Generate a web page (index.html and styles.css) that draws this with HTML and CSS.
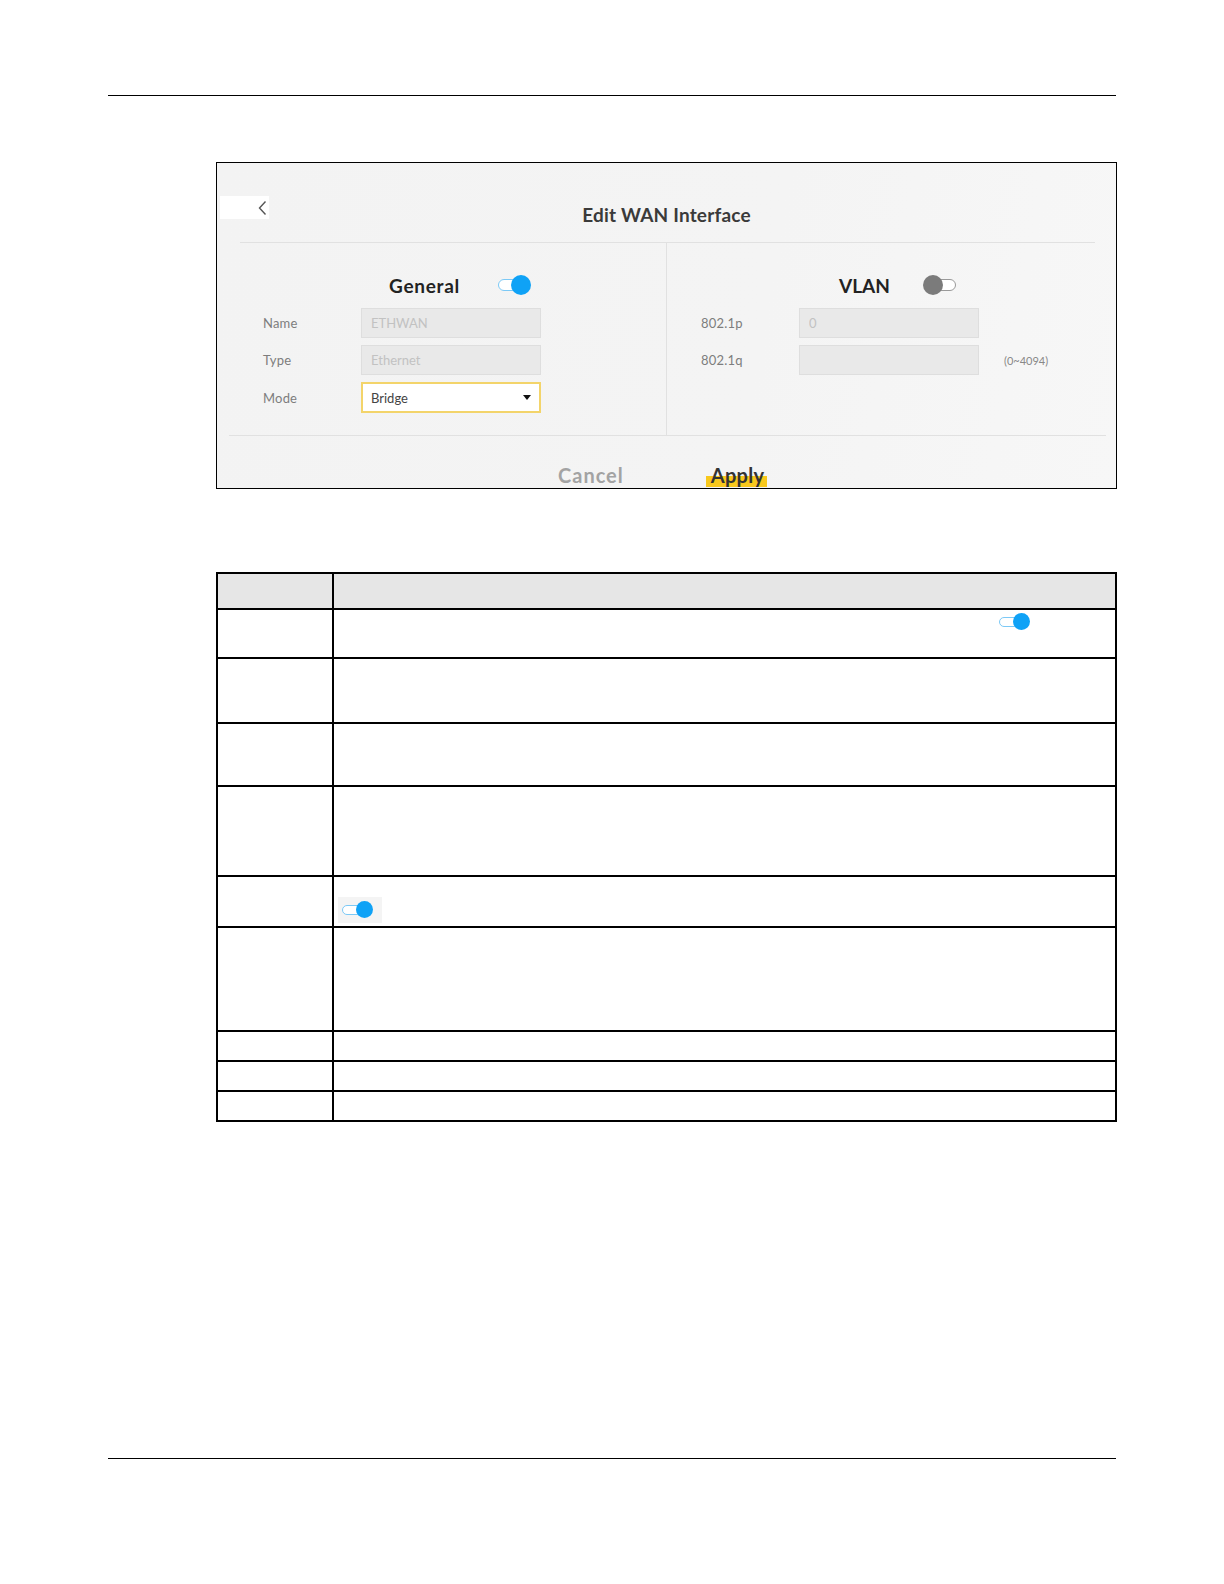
FILE: index.html
```html
<!DOCTYPE html>
<html lang="en">

<head>
    <meta charset="utf-8">
    <meta name="viewport" content="width=device-width, initial-scale=1.0">
    <title>Edit WAN Interface</title>
    <link rel="stylesheet" href="styles.css">
</head>

<body>
    <div class="page">
        <hr class="rule">

        <figure class="shot">
            <div class="shot-head">
                <button class="back" type="button" aria-label="Back">
                    <svg width="10" height="16" viewBox="0 0 10 16">
                        <path d="M7.5 1.5 L1.5 8 L7.5 14.5" fill="none" stroke="#555" stroke-width="1.4" />
                    </svg>
                </button>
                <h1 class="shot-title">Edit WAN Interface</h1>
                <div></div>
            </div>
            <div class="divider divider-head"></div>

            <div class="shot-body">
                <section class="col col-left">
                    <div class="col-heading">
                        <h2>General</h2>
                        <span class="toggle on"><span class="track"></span><span class="knob"></span></span>
                    </div>
                    <div class="field">
                        <label for="nameInput">Name</label>
                        <input type="text" id="nameInput" value="ETHWAN" disabled />
                    </div>
                    <div class="field">
                        <label for="typeInput">Type</label>
                        <input type="text" id="typeInput" value="Ethernet" disabled />
                    </div>
                    <div class="field field-mode">
                        <label for="modeSelect">Mode</label>
                        <div class="select" id="modeSelect">
                            <span>Bridge</span>
                            <svg width="8" height="5" viewBox="0 0 8 5"><path d="M0 0 H8 L4 5 Z" fill="#111" /></svg>
                        </div>
                    </div>
                </section>

                <section class="col col-right">
                    <div class="col-heading">
                        <h2>VLAN</h2>
                        <span class="toggle off"><span class="track"></span><span class="knob"></span></span>
                    </div>
                    <div class="field">
                        <label for="pInput">802.1p</label>
                        <input type="text" id="pInput" value="0" disabled />
                    </div>
                    <div class="field">
                        <label for="qInput">802.1q</label>
                        <input type="text" id="qInput" value="" disabled />
                        <span class="hint">(0~4094)</span>
                    </div>
                </section>
            </div>
            <div class="divider divider-foot"></div>

            <div class="shot-actions">
                <span class="btn-cancel">Cancel</span>
                <span class="btn-apply">Apply</span>
            </div>
        </figure>

        <table class="desc">
            <colgroup>
                <col class="desc-label">
                <col>
            </colgroup>
            <thead>
                <tr class="h-36">
                    <th></th>
                    <th></th>
                </tr>
            </thead>
            <tbody>
                <tr class="h-49">
                    <td></td>
                    <td>
                        <span class="toggle toggle-sm on inline-end"><span class="track"></span><span class="knob"></span></span>
                    </td>
                </tr>
                <tr class="h-65"><td></td><td></td></tr>
                <tr class="h-63"><td></td><td></td></tr>
                <tr class="h-90"><td></td><td></td></tr>
                <tr class="h-51">
                    <td></td>
                    <td>
                        <span class="toggle-box"><span class="toggle toggle-sm on"><span class="track"></span><span class="knob"></span></span></span>
                    </td>
                </tr>
                <tr class="h-104"><td></td><td></td></tr>
                <tr class="h-30"><td></td><td></td></tr>
                <tr class="h-30"><td></td><td></td></tr>
                <tr class="h-30"><td></td><td></td></tr>
            </tbody>
        </table>

        <hr class="rule rule-bottom">
    </div>
</body>

</html>
```

FILE: styles.css
```css
body {
    font-family: Lato, "Open Sans", Arial, sans-serif;
    margin: 0;
    padding: 0;
    background-color: #fff;
}

.page {
    padding: 95px 108px 0;
    width: 1008px;
}

.rule {
    margin: 0;
    border: none;
    border-top: 1px solid #000;
}

.rule-bottom {
    margin-top: 336px;
}

/* screenshot of the router page */
.shot {
    box-sizing: border-box;
    margin: 66px 0 0 108px;
    width: 901px;
    height: 327px;
    border: 1px solid #000;
    background: linear-gradient(100deg, #f3f3f3 0%, #f4f4f4 60%, #f7f7f7 100%);
    overflow: hidden;
}

.shot-head {
    display: grid;
    grid-template-columns: 1fr auto 1fr;
    height: 79px;
}

.back {
    margin: 33px 0 0 3px;
    width: 49px;
    height: 23px;
    padding: 0 0 0 38px;
    border: none;
    background-color: #fff;
    display: flex;
    align-items: center;
}

.shot-title {
    margin: 41px 0 0;
    font-size: 19px;
    line-height: 22px;
    font-weight: bold;
    color: #3a3a3a;
    letter-spacing: 0.2px;
}

.divider {
    border-top: 1px solid #e1e1e1;
}

.divider-head {
    margin: 0 21px 0 23px;
}

.divider-foot {
    margin: 0 10px 0 12px;
}

.shot-body {
    display: grid;
    grid-template-columns: 450px 1fr;
    height: 192px;
}

.col {
    padding-top: 32px;
}

.col-left {
    border-right: 1px solid #e1e1e1;
}

.col-heading {
    display: flex;
    align-items: center;
    gap: 38px;
    height: 20px;
    padding-left: 172px;
    margin-bottom: 13px;
}

.col-right .col-heading {
    gap: 33px;
}

.col-heading h2 {
    margin: 0;
    font-size: 19px;
    font-weight: bold;
    color: #222;
    letter-spacing: 0.7px;
}

.col-right .col-heading h2 {
    letter-spacing: 0;
}

.field {
    display: flex;
    align-items: center;
    height: 30px;
    margin-bottom: 7px;
}

.field label {
    box-sizing: border-box;
    width: 144px;
    padding-left: 46px;
    font-size: 13px;
    color: #7d7d7d;
    letter-spacing: 0.2px;
}

.col-right .field label {
    width: 132px;
    padding-left: 34px;
}

.field input {
    box-sizing: border-box;
    width: 180px;
    height: 30px;
    padding: 0 9px;
    border: 1px solid #dedede;
    background-color: #e9e9e9;
    font-family: inherit;
    font-size: 13px;
    color: #c2c2c2;
}

.field-mode {
    height: 31px;
}

.select {
    box-sizing: border-box;
    width: 180px;
    height: 31px;
    padding: 0 8px 0 8px;
    border: 2px solid #f3d46a;
    background-color: #fff;
    display: flex;
    align-items: center;
    justify-content: space-between;
    font-size: 13px;
    color: #444;
}

.hint {
    margin-left: 25px;
    font-size: 11px;
    color: #888;
}

.shot-actions {
    display: flex;
    align-items: flex-start;
    gap: 82px;
    padding: 27px 0 0 341px;
}

.btn-cancel,
.btn-apply {
    font-size: 20px;
    line-height: 24px;
    font-weight: bold;
}

.btn-cancel {
    color: #a3a3a3;
    letter-spacing: 1px;
}

.btn-apply {
    padding: 0 3px 0 5px;
    color: #333;
    letter-spacing: 0.3px;
    background: linear-gradient(to bottom, transparent 0, transparent 13px, #f8c81c 13px);
}

/* toggles */
.toggle {
    position: relative;
    display: inline-block;
    width: 33px;
    height: 20px;
}

.toggle .track {
    position: absolute;
    top: 4px;
    height: 12px;
    box-sizing: border-box;
    border-radius: 6px;
    background-color: #fff;
}

.toggle .knob {
    position: absolute;
    top: 0;
    width: 20px;
    height: 20px;
    border-radius: 50%;
}

.toggle.on .track {
    left: 0;
    width: 24px;
    border: 1.5px solid #7cc9f6;
}

.toggle.on .knob {
    right: 0;
    background-color: #0fa2f6;
}

.toggle.off .track {
    right: 0;
    width: 24px;
    border: 1.5px solid #9a9a9a;
}

.toggle.off .knob {
    left: 0;
    background-color: #7b7b7b;
}

.toggle-sm {
    width: 31px;
    height: 17px;
}

.toggle-sm .track {
    top: 3.5px;
    height: 10px;
}

.toggle-sm.on .track {
    width: 20px;
    border-width: 1.2px;
}

.toggle-sm .knob {
    width: 17px;
    height: 17px;
}

.toggle-box {
    display: inline-flex;
    align-items: center;
    padding: 4px 9px 5px 4px;
    margin: 20px 0 0 4px;
    background-color: #f4f4f4;
}

.inline-end {
    margin: 3px 0 0 665px;
}

/* description table */
.desc {
    margin: 83px 0 0 108px;
    width: 901px;
    border-collapse: collapse;
    table-layout: fixed;
}

.desc-label {
    width: 116px;
}

.desc th,
.desc td {
    border: 2px solid #000;
    padding: 0;
    vertical-align: top;
}

.desc th {
    background-color: #e6e6e6;
}

.h-30 { height: 30px; }
.h-36 { height: 36px; }
.h-49 { height: 49px; }
.h-51 { height: 51px; }
.h-63 { height: 63px; }
.h-65 { height: 65px; }
.h-90 { height: 90px; }
.h-104 { height: 104px; }
```
